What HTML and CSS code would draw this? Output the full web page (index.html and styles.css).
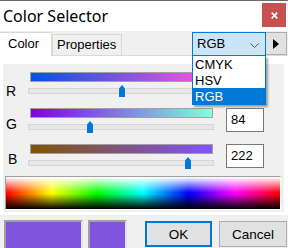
FILE: index.html
```html
<!DOCTYPE html>
<html lang="en">
<head>
    <meta charset="UTF-8">
    <meta name="viewport" content="width=device-width, initial-scale=1.0">
    <title>Color Selector</title>
    <link rel="stylesheet" href="styles.css">
</head>
<body>
    <div class="window">
        <div class="titlebar">
            <span class="title">Color Selector</span>
            <div class="close">
                <svg width="7" height="7" viewBox="0 0 7 7"><path d="M0.7 0.7 L6.3 6.3 M6.3 0.7 L0.7 6.3" stroke="#fff" stroke-width="1.7"/></svg>
            </div>
        </div>
        <div class="tabstrip">
            <div class="tab active">Color</div>
            <div class="tab">Properties</div>
            <div class="combo">
                <span>RGB</span>
                <svg class="chevron" width="9" height="5" viewBox="0 0 9 5"><path d="M0.5 0.5 L4.5 4.5 L8.5 0.5" fill="none" stroke="#555" stroke-width="1"/></svg>
                <ul class="droplist">
                    <li>CMYK</li>
                    <li>HSV</li>
                    <li class="selected">RGB</li>
                </ul>
            </div>
            <div class="spin">
                <svg width="6" height="10" viewBox="0 0 6 10"><path d="M0 0 L6 5 L0 10 Z" fill="#000"/></svg>
            </div>
        </div>
        <div class="page">
            <div class="panel">
                <div class="channels">
                    <div class="channel">
                        <div class="label label-r">R</div>
                        <div class="slider">
                            <div class="bar bar-r"></div>
                            <div class="track"><div class="thumb" style="left: 90px"></div></div>
                        </div>
                        <div class="value">128</div>
                    </div>
                    <div class="channel">
                        <div class="label label-g">G</div>
                        <div class="slider">
                            <div class="bar bar-g"></div>
                            <div class="track"><div class="thumb" style="left: 58px"></div></div>
                        </div>
                        <div class="value">84</div>
                    </div>
                    <div class="channel">
                        <div class="label label-b">B</div>
                        <div class="slider">
                            <div class="bar bar-b"></div>
                            <div class="track"><div class="thumb" style="left: 156px"></div></div>
                        </div>
                        <div class="value">222</div>
                    </div>
                </div>
                <div class="spectrum"></div>
            </div>
        </div>
        <div class="footer">
            <div class="swatch swatch-big"></div>
            <div class="swatch swatch-small"></div>
            <div class="btn btn-default">OK</div>
            <div class="btn btn-cancel">Cancel</div>
        </div>
    </div>
</body>
</html>
```

FILE: styles.css
```css
body {
    margin: 0;
    background-color: #f0f0f0;
    font-family: "Liberation Sans", Arial, sans-serif;
    font-size: 13px;
    color: #000;
}
.window {
    width: 288px;
    height: 248px;
    overflow: hidden;
    background-color: #f0f0f0;
}
.titlebar {
    display: flex;
    align-items: flex-start;
    height: 30px;
    background-color: #fff;
    border-top: 1px solid #6b6b6b;
}
.title {
    font-family: "Noto Sans", sans-serif;
    font-size: 16px;
    line-height: 22px;
    padding: 4px 0 0 3px;
}
.close {
    margin: 2px 2px 0 auto;
    width: 24px;
    height: 24px;
    background-color: #c75050;
    display: flex;
    justify-content: center;
    align-items: center;
}
.tabstrip {
    position: relative;
    z-index: 2;
    display: flex;
    align-items: flex-end;
    height: 24px;
}
.tab {
    box-sizing: border-box;
    height: 21px;
    width: 70px;
    padding: 2px 0 0 4px;
    line-height: 15px;
    border: 1px solid #d9d9d9;
    border-bottom: none;
    background-color: #f0f0f0;
}
.tab.active {
    width: 52px;
    height: 24px;
    margin-bottom: -1px;
    padding: 3px 0 0 8px;
    border-left: none;
    background-color: #fff;
}
.combo {
    position: relative;
    box-sizing: border-box;
    align-self: flex-start;
    display: flex;
    margin: 1px 0 0 auto;
    width: 74px;
    height: 24px;
    padding: 3px 0 0 4px;
    line-height: 15px;
    background-color: #cce4f7;
    border: 1px solid #0078d7;
}
.chevron {
    margin: 7px 0 0 auto;
    margin-right: 6px;
}
.droplist {
    position: absolute;
    top: calc(100% + 1px);
    left: -1px;
    width: 74px;
    box-sizing: border-box;
    margin: 0;
    padding: 0;
    list-style: none;
    background-color: #fff;
    border: 1px solid #0078d7;
    border-top: none;
    box-shadow: 2px 2px 2px rgba(0, 0, 0, 0.35);
}
.droplist li {
    height: 16px;
    line-height: 15px;
    padding: 1px 0 0 2px;
    box-sizing: border-box;
}
.droplist li.selected {
    background-color: #0078d7;
    color: #fff;
}
.spin {
    box-sizing: border-box;
    align-self: flex-start;
    margin: 1px 1px 0 0;
    width: 21px;
    height: 23px;
    background-color: #e1e1e1;
    border: 1px solid #adadad;
    border-left: none;
    display: flex;
    justify-content: center;
    align-items: center;
}
.page {
    height: 160px;
    box-sizing: border-box;
    background-color: #fff;
    border-top: 1px solid #d9d9d9;
    padding: 8px 4px 3px 3px;
}
.panel {
    height: 148px;
    box-sizing: border-box;
    background-color: #f0f0f0;
    padding-top: 8px;
}
.channels {
    display: flex;
    flex-direction: column;
    gap: 12px;
}
.channel {
    display: flex;
    height: 24px;
}
.label {
    width: 25px;
    box-sizing: border-box;
    padding-left: 3px;
    font-size: 14px;
    line-height: 16px;
}
.label-r {
    padding-top: 11px;
}
.label-g {
    padding-top: 8px;
}
.label-b {
    padding-top: 7px;
    padding-left: 5px;
}
.slider {
    width: 186px;
}
.bar {
    box-sizing: border-box;
    margin-left: 2px;
    width: 183px;
    height: 10px;
    border: 1px solid #a0a0a0;
}
.bar-r {
    background: linear-gradient(to right, rgb(0, 84, 222), rgb(255, 84, 222));
}
.bar-g {
    background: linear-gradient(to right, rgb(128, 0, 222), rgb(128, 255, 222));
}
.bar-b {
    background: linear-gradient(to right, rgb(128, 84, 0), rgb(128, 84, 255));
}
.track {
    position: relative;
    box-sizing: border-box;
    margin-top: 6px;
    height: 6px;
    background-color: #e7e7e7;
    border: 1px solid #d6d6d6;
}
.thumb {
    position: absolute;
    top: -4px;
    width: 6px;
    height: 12px;
    background-color: #0078d7;
    clip-path: polygon(50% 0, 100% 30%, 100% 100%, 0 100%, 0 30%);
}
.value {
    box-sizing: border-box;
    margin-left: 12px;
    width: 38px;
    height: 24px;
    padding: 3px 0 0 4px;
    line-height: 15px;
    background-color: #fff;
    border: 1px solid #7a7a7a;
}
.spectrum {
    box-sizing: border-box;
    margin: 8px 0 0 2px;
    width: 276px;
    height: 34px;
    border: 1px solid;
    border-color: #a0a0a0 #fff #fff #a0a0a0;
    background:
        linear-gradient(to bottom, #fff 0%, rgba(255, 255, 255, 0) 48%, rgba(0, 0, 0, 0) 52%, #000 100%),
        linear-gradient(to right, #f00, #ff0, #0f0, #0ff, #00f, #f0f, #f00);
}
.footer {
    display: flex;
    align-items: flex-start;
    padding: 5px 0 0 4px;
}
.swatch {
    box-sizing: border-box;
    height: 30px;
    background-color: rgb(128, 84, 222);
    border: 2px solid;
    border-color: #a0a0a0 #e3e3e3 #e3e3e3 #a0a0a0;
}
.swatch-big {
    width: 79px;
}
.swatch-small {
    width: 39px;
    margin-left: 5px;
}
.btn {
    box-sizing: border-box;
    margin-top: 1px;
    height: 26px;
    display: flex;
    justify-content: center;
    align-items: center;
    font-size: 13.5px;
    background-color: #e1e1e1;
    border: 1px solid #adadad;
}
.btn-default {
    margin-left: 18px;
    width: 67px;
    border: 2px solid #0078d7;
}
.btn-cancel {
    margin-left: 7px;
    width: 68px;
}
```
